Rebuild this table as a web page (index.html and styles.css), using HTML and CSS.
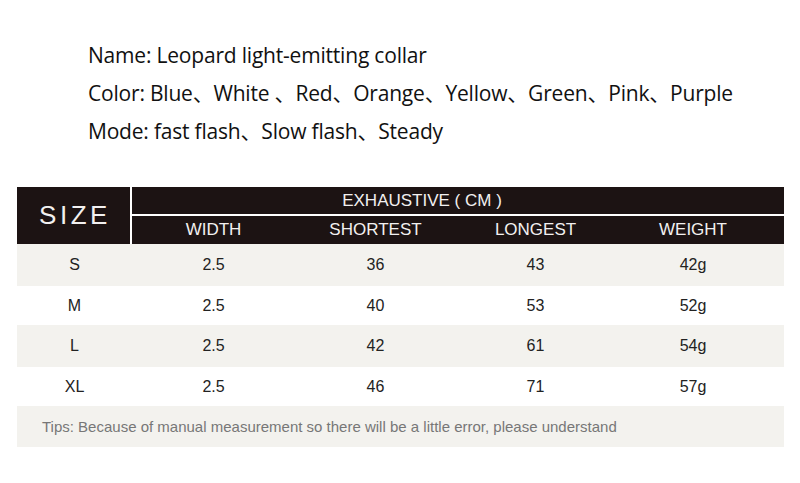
FILE: index.html
```html
<!DOCTYPE html>
<html lang="en">
<head>
    <meta charset="UTF-8">
    <meta name="viewport" content="width=device-width, initial-scale=1.0">
    <title>Leopard light-emitting collar</title>
    <link rel="stylesheet" href="styles.css">
</head>
<body>

    <div class="intro">
        <p>Name: Leopard light-emitting collar</p>
        <p>Color: Blue、White 、Red、Orange、Yellow、Green、Pink、Purple</p>
        <p>Mode: fast flash、Slow flash、Steady</p>
    </div>

    <div class="chart">
        <div class="head">
            <div class="size-cell">SIZE</div>
            <div class="dims">
                <div class="dims-title">EXHAUSTIVE ( CM )</div>
                <div class="cols dims-names">
                    <span>WIDTH</span>
                    <span>SHORTEST</span>
                    <span>LONGEST</span>
                    <span>WEIGHT</span>
                </div>
            </div>
        </div>

        <div class="row shade">
            <span class="size">S</span>
            <div class="cols"><span>2.5</span><span>36</span><span>43</span><span>42g</span></div>
        </div>
        <div class="row plain">
            <span class="size">M</span>
            <div class="cols"><span>2.5</span><span>40</span><span>53</span><span>52g</span></div>
        </div>
        <div class="row shade">
            <span class="size">L</span>
            <div class="cols"><span>2.5</span><span>42</span><span>61</span><span>54g</span></div>
        </div>
        <div class="row plain">
            <span class="size">XL</span>
            <div class="cols"><span>2.5</span><span>46</span><span>71</span><span>57g</span></div>
        </div>

        <div class="tips">Tips: Because of manual measurement so there will be a little error, please understand</div>
    </div>

</body>
</html>
```

FILE: styles.css
```css
body {
    margin: 0;
    background: #fff;
    font-family: "Liberation Sans", Arial, "Noto Sans CJK SC", sans-serif;
}
.intro {
    padding: 36px 0 0 88px;
    font-family: "Open Sans", "Noto Sans CJK SC", sans-serif;
    font-size: 21px;
    line-height: 38px;
    letter-spacing: -0.2px;
    color: #111;
}
.intro p {
    margin: 0;
}
.chart {
    margin: 37px 16px 0 17px;
}
.head {
    display: flex;
    background: #1c1313;
    color: #f2f0f0;
}
.size-cell {
    width: 115px;
    height: 57px;
    display: flex;
    align-items: center;
    justify-content: center;
    font-size: 26px;
    letter-spacing: 3.5px;
    padding-left: 3px;
    box-sizing: border-box;
    border-right: 2px solid #fff;
}
.dims {
    flex: 1;
}
.dims-title {
    height: 27px;
    line-height: 27px;
    text-align: center;
    padding-right: 72px;
    font-size: 17px;
    border-bottom: 2px solid #fff;
}
.cols {
    flex: 1;
    display: grid;
    grid-template-columns: 163px 161px 159px 156px 1fr;
    align-items: center;
    text-align: center;
}
.dims-names {
    height: 28px;
    font-size: 17px;
}
.row {
    display: flex;
    align-items: center;
    font-size: 16px;
    color: #222;
}
.row .size {
    width: 115px;
    text-align: center;
}
.shade {
    height: 42px;
    background: #f3f2ee;
}
.plain {
    height: 39px;
    background: #fff;
}
.tips {
    height: 41px;
    line-height: 41px;
    padding-left: 25px;
    background: #f3f2ee;
    color: #777;
    font-size: 15px;
}
```
